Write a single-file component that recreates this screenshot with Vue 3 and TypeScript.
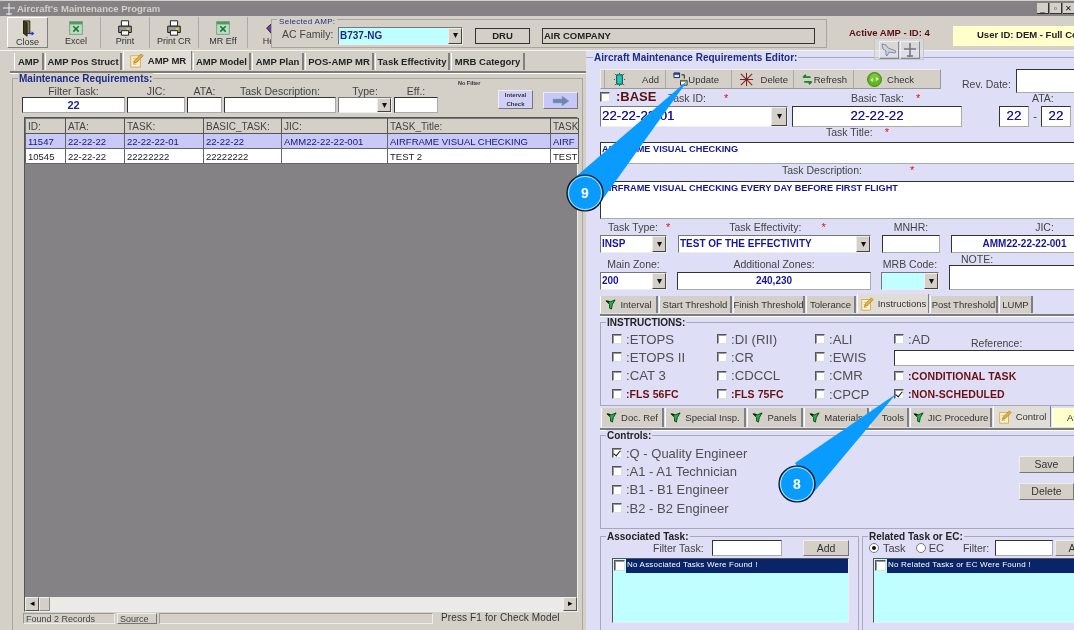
<script setup lang="ts">
interface Tab { label: string; w: number; icon?: 'note' | 'flag'; active?: boolean; pad?: boolean; yellow?: boolean }
interface Check { label: string; on?: boolean; bold?: boolean }

const topButtons = [
  { label: 'Close', icon: 'door', w: 41 },
  { label: 'Excel', icon: 'excel', w: 49 },
  { label: 'Print', icon: 'printer', w: 49 },
  { label: 'Print CR', icon: 'printer', w: 49 },
  { label: 'MR Eff', icon: 'excel', w: 49 },
  { label: 'Help', icon: 'help', w: 49 },
]
const leftTabs: Tab[] = [
  { label: 'AMP', w: 30 }, { label: 'AMP Pos Struct', w: 77 },
  { label: 'AMP MR', w: 69, icon: 'note', active: true }, { label: 'AMP Model', w: 58 },
  { label: 'AMP Plan', w: 52 }, { label: 'POS-AMP MR', w: 69 },
  { label: 'Task Effectivity', w: 75 }, { label: 'MRB Category', w: 74 },
]
const midTabs: Tab[] = [
  { label: 'Interval', w: 58, icon: 'flag' }, { label: 'Start Threshold', w: 73 },
  { label: 'Finish Threshold', w: 72 }, { label: 'Tolerance', w: 50 },
  { label: 'Instructions', w: 72, icon: 'note', active: true }, { label: 'Post Threshold', w: 68 },
  { label: 'LUMP', w: 34 },
]
const lowTabs: Tab[] = [
  { label: 'Doc. Ref', w: 63, icon: 'flag' }, { label: 'Special Insp.', w: 81, icon: 'flag' },
  { label: 'Panels', w: 56, icon: 'flag' }, { label: 'Materials', w: 65, icon: 'flag' },
  { label: 'Tools', w: 39, pad: true }, { label: 'JIC Procedure', w: 82, icon: 'flag' },
  { label: 'Control', w: 58, icon: 'note', active: true }, { label: 'Af', w: 40, yellow: true },
]
const toolButtons = [
  { label: 'Add', icon: 'add', w: 61, pl: 7, pr: 6 }, { label: 'Update', icon: 'update', w: 66, pl: 7, pr: 12 },
  { label: 'Delete', icon: 'del', w: 62, pl: 7, pr: 5 }, { label: 'Refresh', icon: 'refresh', w: 60, pl: 7, pr: 6 },
  { label: 'Check', icon: 'check', w: 67, pl: 13, pr: 6 },
]
const instructionCols: Check[][] = [
  [{ label: ':ETOPS' }, { label: ':ETOPS II' }, { label: ':CAT 3' }, { label: ':FLS 56FC', bold: true }],
  [{ label: ':DI (RII)' }, { label: ':CR' }, { label: ':CDCCL' }, { label: ':FLS 75FC', bold: true }],
  [{ label: ':ALI' }, { label: ':EWIS' }, { label: ':CMR' }, { label: ':CPCP' }],
]
const controls: Check[] = [
  { label: ':Q - Quality Engineer', on: true }, { label: ':A1 - A1 Technician' },
  { label: ':B1 - B1 Engineer' }, { label: ':B2 - B2 Engineer' },
]
const columns = [
  { t: 'ID:', w: 40 }, { t: 'ATA:', w: 59 }, { t: 'TASK:', w: 79 }, { t: 'BASIC_TASK:', w: 78 },
  { t: 'JIC:', w: 106 }, { t: 'TASK_Title:', w: 163 }, { t: 'TASK', w: 28 },
]
const rows = [
  ['11547', '22-22-22', '22-22-22-01', '22-22-22', 'AMM22-22-22-001', 'AIRFRAME VISUAL CHECKING', 'AIRF'],
  ['10545', '22-22-22', '22222222', '22222222', '', 'TEST 2', 'TEST'],
]
</script>

<template>
  <div class="app">
    <svg class="defs" width="0" height="0">
      <symbol id="i-flag" viewBox="0 0 12 12"><path d="M1 2l5 1 5-2-3 5-1 5-2-1V6z" fill="#18c040" stroke="#0a2a12" stroke-width=".9"/><path d="M1 2l3 0 1 3z" fill="#111"/></symbol>
      <symbol id="i-note" viewBox="0 0 16 16"><rect x="2" y="3" width="10" height="12" fill="#fff6d8" stroke="#d9a441"/><path d="M4 6h6M4 9h6M4 12h4" stroke="#c9b98a"/><path d="M13 1l2 2-7 7-3 1 1-3z" fill="#f0b030" stroke="#8a6414" stroke-width=".6"/></symbol>
      <symbol id="i-door" viewBox="0 0 20 20"><path d="M5 1h7v14H5z" fill="#8a8440" stroke="#222"/><path d="M5 1l4 2v15l-4-3z" fill="#3f3a14" stroke="#222"/><path d="M11 15h5" stroke="#1f3fd0" stroke-width="1.6"/><path d="M14 12.5l3 2.5-3 2.5z" fill="#1f3fd0"/></symbol>
      <symbol id="i-excel" viewBox="0 0 20 20"><rect x="3" y="3" width="14" height="14" fill="#bfdcc0" stroke="#6aa07a"/><rect x="3" y="3" width="14" height="3" fill="#4e9a62"/><path d="M7 8l6 6M13 8l-6 6" stroke="#1a7a3a" stroke-width="1.8"/></symbol>
      <symbol id="i-printer" viewBox="0 0 20 20"><path d="M6 2h8v6H6z" fill="#fff" stroke="#111"/><path d="M3 8h14v7H3z" fill="#9a9a96" stroke="#111"/><path d="M6 13h8v5H6z" fill="#fff" stroke="#111"/><rect x="12" y="10" width="3" height="2" fill="#e8d020"/></symbol>
      <symbol id="i-help" viewBox="0 0 20 20"><path d="M4 10l8-7 6 7-8 7z" fill="#6a3ab0" stroke="#222"/></symbol>
      <symbol id="i-add" viewBox="0 0 16 16"><path d="M5 3h6v10H5z" fill="#1fc8c0" stroke="#043"/><path d="M3 2l1 1M13 2l-1 1M3 14l1-1M13 14l-1-1M2 8h1M13 8h1M8 1v1M8 14v1" stroke="#333"/></symbol>
      <symbol id="i-update" viewBox="0 0 16 16"><path d="M1 1h6v5H1z" fill="#dfeaff" stroke="#123"/><path d="M1 1h6v2H1z" fill="#1c3cc0"/><path d="M8 9h7v5H8z" fill="#fff" stroke="#123"/><path d="M8 9h7v1.5H8z" fill="#b08a20"/><path d="M9 3h3v4" stroke="#111" fill="none"/></symbol>
      <symbol id="i-del" viewBox="0 0 16 16"><path d="M2 2l12 12M14 2L2 14" stroke="#c02020" stroke-width="1.5"/><path d="M8 1v14M1 8h14" stroke="#333"/></symbol>
      <symbol id="i-refresh" viewBox="0 0 16 16"><path d="M12 5H4l2-3M4 11h8l-2 3" stroke="#0a8a2a" stroke-width="2" fill="none"/><path d="M2 5l3-3M14 11l-3 3" stroke="#052" stroke-width=".8"/></symbol>
      <symbol id="i-check" viewBox="0 0 16 16"><circle cx="8" cy="8" r="7.4" fill="#5fb81e" stroke="#3c8010"/><circle cx="8" cy="6" r="4.5" fill="#86d040" opacity=".7"/><path d="M3.5 8.5l2.5-2.2v4.4zM12.5 7.5L10 5.3v4.4z" fill="#fff"/></symbol>
      <symbol id="i-arrow" viewBox="0 0 18 10"><path d="M1 3h9V0l7 5-7 5V7H1z" fill="#6e86ad" stroke="#8ea2c4" stroke-width=".5"/></symbol>
    </svg>

    <div class="titlebar">
      <svg class="plane" width="12" height="12" viewBox="0 0 12 12"><path d="M6 0v12M0 5h12M3 11h6" stroke="#eee" fill="none"/></svg>
      <span class="title-text">Aircraft's Maintenance Program</span>
      <div class="winbtns"><span class="winbtn">_</span><span class="winbtn">▫</span><span class="winbtn">✕</span></div>
    </div>

    <div class="topbar">
      <div class="top-tools">
        <div v-for="(b, i) in topButtons" :key="b.label" class="top-btn" :class="{ raised: i === 0 }" :style="{ width: b.w + 'px' }">
          <svg width="18" height="18"><use :href="'#i-' + b.icon" /></svg>
          <span>{{ b.label }}</span>
        </div>
      </div>
      <div class="amp-group">
        <span class="amp-legend">Selected AMP:</span>
        <span class="amp-label">AC Family:</span>
        <div class="combo cyan amp-combo"><span class="combo-text navy-b">B737-NG</span><span class="arrow">▾</span></div>
        <div class="boxed dru">DRU</div>
        <div class="boxed company">AIR COMPANY</div>
      </div>
      <div class="active-amp">Active AMP - ID: 4</div>
      <div class="user-box">User ID: DEM - Full Control</div>
    </div>

    <div class="mini-icons">
      <span class="mini"><svg width="16" height="14" viewBox="0 0 16 14"><path d="M1 1l4 1 2 3 8 3-1 2-6-1-2 4-1-1v-4L2 6z" fill="#cdd2f0" stroke="#777" stroke-width=".8"/></svg></span>
      <span class="mini"><svg width="16" height="16" viewBox="0 0 16 16"><path d="M8 1v14M2 7h12M5 14h6" stroke="#777" stroke-width="1.6" fill="none"/></svg></span>
    </div>

    <div class="main">
      <section class="left">
        <div class="tabs left-tabs">
          <div v-for="t in leftTabs" :key="t.label" class="tab bold-tab" :class="{ active: t.active }" :style="{ width: t.w + 'px' }">
            <svg v-if="t.icon" width="15" height="15"><use :href="'#i-' + t.icon" /></svg>{{ t.label }}
          </div>
        </div>
        <div class="left-rule"></div>
        <div class="mr-group">
          <span class="legend navy-b">Maintenance Requirements:</span>
          <div class="filter-row">
            <div class="filters">
              <span class="lbl">Filter Task:</span><span class="lbl">JIC:</span><span class="lbl">ATA:</span>
              <span class="lbl">Task Description:</span><span class="lbl">Type:</span><span class="lbl">Eff.:</span>
              <div class="input center navy-b">22</div><div class="input"></div><div class="input"></div><div class="input"></div>
              <div class="combo"><span class="combo-text"></span><span class="arrow">▾</span></div><div class="input"></div>
            </div>
            <span class="nofilter">No Filter</span>
            <div class="interval">Interval Check</div>
            <div class="go"><svg width="18" height="10"><use href="#i-arrow" /></svg></div>
          </div>
          <div class="grid-box">
            <table class="table">
              <colgroup><col v-for="c in columns" :key="c.t" :style="{ width: c.w + 'px' }" /></colgroup>
              <thead><tr><th v-for="c in columns" :key="c.t">{{ c.t }}</th></tr></thead>
              <tbody>
                <tr v-for="(r, i) in rows" :key="r[0]" :class="{ sel: i === 0 }"><td v-for="(c, j) in r" :key="j">{{ c }}</td></tr>
              </tbody>
            </table>
            <div class="grid-empty"></div>
            <div class="hscroll"><span class="sbtn">◂</span><span class="thumb"></span><span class="track"></span><span class="sbtn">▸</span></div>
          </div>
          <div class="status">
            <span class="st st1">Found 2 Records</span><span class="st st2">Source</span><span class="st st3"></span>
            <span class="press">Press F1 for Check Model</span>
          </div>
        </div>
      </section>

      <section class="right">
        <div class="ed-head"><span class="legend navy-b ed-legend">Aircraft Maintenance Requirements Editor:</span></div>
        <div class="tool-row">
          <div class="tools">
            <div v-for="b in toolButtons" :key="b.label" class="tool" :style="{ width: b.w + 'px', paddingLeft: b.pl + 'px', paddingRight: b.pr + 'px' }">
              <svg width="15" height="15"><use :href="'#i-' + b.icon" /></svg><span>{{ b.label }}</span>
            </div>
          </div>
          <span class="lbl rev-lbl">Rev. Date:</span>
          <div class="input rev"></div>
        </div>

        <div class="row-base">
          <span class="cb"></span><span class="base">:BASE</span>
          <span class="lbl task-id">Task ID:<i>*</i></span>
          <span class="lbl basic">Basic Task:<i>*</i></span>
          <span class="lbl ata">ATA:</span>
        </div>
        <div class="row-ids">
          <div class="combo big-combo"><span class="combo-text navy-l">22-22-22-01</span><span class="arrow">▾</span></div>
          <div class="input center navy-l basic-input">22-22-22</div>
          <div class="input center navy-l ata-input">22</div><span class="dash">-</span>
          <div class="input center navy-l ata-input">22</div><span class="dash">-</span>
        </div>
        <div class="lbl title-lbl">Task Title:<i>*</i></div>
        <div class="input wide title-input navy-s">AIRFRAME VISUAL CHECKING</div>
        <div class="lbl desc-lbl">Task Description:<i>*</i></div>
        <div class="input wide desc-input navy-s">AIRFRAME VISUAL CHECKING EVERY DAY BEFORE FIRST FLIGHT</div>

        <div class="form-grid">
          <span class="lbl ty">Task Type:<i>*</i></span><span class="lbl te">Task Effectivity:<i>*</i></span>
          <span class="lbl">MNHR:</span><span class="lbl jic">JIC:</span>
          <div class="combo"><span class="combo-text navy-s">INSP</span><span class="arrow">▾</span></div>
          <div class="combo"><span class="combo-text navy-s">TEST OF THE EFFECTIVITY</span><span class="arrow">▾</span></div>
          <div class="input"></div>
          <div class="input center navy-s">AMM22-22-22-001</div>
        </div>
        <div class="form-grid second">
          <span class="lbl">Main Zone:</span><span class="lbl">Additional Zones:</span><span class="lbl">MRB Code:</span>
          <div class="note-cell"><span class="lbl note-lbl">NOTE:</span><div class="input note"></div></div>
          <div class="combo"><span class="combo-text navy-s">200</span><span class="arrow">▾</span></div>
          <div class="input center navy-s">240,230</div>
          <div class="combo cyan"><span class="combo-text"></span><span class="arrow">▾</span></div>
        </div>

        <div class="tabs mid-tabs">
          <div v-for="t in midTabs" :key="t.label" class="tab" :class="{ active: t.active }" :style="{ width: t.w + 'px' }">
            <svg v-if="t.icon" :width="t.icon === 'note' ? 14 : 11" :height="t.icon === 'note' ? 14 : 11"><use :href="'#i-' + t.icon" /></svg>{{ t.label }}
          </div>
        </div>
        <div class="rule"></div>

        <div class="group instr">
          <span class="legend blk">INSTRUCTIONS:</span>
          <div v-for="(col, ci) in instructionCols" :key="ci" class="chk-col" :class="'c' + ci">
            <label v-for="c in col" :key="c.label" class="chk">
              <span class="cb"></span><span :class="c.bold ? 'red' : 'big'">{{ c.label }}</span>
            </label>
          </div>
          <div class="chk-col c3">
            <div class="chk"><span class="cb"></span><span class="big">:AD</span><span class="lbl ref">Reference:</span></div>
            <div class="input ref-input"></div>
            <div class="chk"><span class="cb"></span><span class="red">:CONDITIONAL TASK</span></div>
            <div class="chk"><span class="cb on"></span><span class="red">:NON-SCHEDULED</span></div>
          </div>
        </div>

        <div class="tabs low-tabs">
          <div v-for="t in lowTabs" :key="t.label" class="tab" :class="{ active: t.active, yellow: t.yellow, pad: t.pad }" :style="{ width: t.w + 'px' }">
            <svg v-if="t.icon" :width="t.icon === 'note' ? 14 : 11" :height="t.icon === 'note' ? 14 : 11"><use :href="'#i-' + t.icon" /></svg>{{ t.label }}
          </div>
        </div>
        <div class="rule"></div>

        <div class="group ctrl">
          <span class="legend blk">Controls:</span>
          <div class="ctrl-list">
            <div v-for="c in controls" :key="c.label" class="chk"><span class="cb" :class="{ on: c.on }"></span><span class="big ctrl-txt">{{ c.label }}</span></div>
          </div>
          <div class="ctrl-btns"><div class="btn">Save</div><div class="btn">Delete</div></div>
        </div>

        <div class="bottom">
          <div class="group assoc">
            <span class="legend blk">Associated Task:</span>
            <div class="assoc-top">
              <span class="lbl">Filter Task:</span><div class="input f1"></div><div class="btn add">Add</div>
            </div>
            <div class="listbox"><div class="list-item"><span class="cb list-cb"></span><span class="list-text">No Associated Tasks Were Found !</span></div></div>
          </div>
          <div class="group relat">
            <span class="legend blk">Related Task or EC:</span>
            <div class="assoc-top">
              <span class="radio on"></span><span class="lbl rl">Task</span>
              <span class="radio"></span><span class="lbl rl rl2">EC</span>
              <span class="lbl ff">Filter:</span><div class="input f2"></div><div class="btn add">Add</div>
            </div>
            <div class="listbox"><div class="list-item"><span class="cb list-cb"></span><span class="list-text">No Related Tasks or EC Were Found !</span></div></div>
          </div>
        </div>
      </section>
    </div>

    <svg class="callouts" width="1074" height="630" viewBox="0 0 1074 630">
      <polygon points="688,80 572,180 600,203" fill="#0a9bff" />
      <polygon points="896,394 795,463 813,493" fill="#0a9bff" />
      <g>
        <circle cx="585" cy="193" r="18" fill="#0a9bff" stroke="#111" stroke-width="1.2" />
        <circle cx="585" cy="193" r="16.5" fill="none" stroke="#e8f4ff" stroke-width=".8" />
        <text x="585" y="198" class="num">9</text>
        <circle cx="797" cy="484" r="18" fill="#0a9bff" stroke="#111" stroke-width="1.2" />
        <circle cx="797" cy="484" r="16.5" fill="none" stroke="#e8f4ff" stroke-width=".8" />
        <text x="797" y="489" class="num">8</text>
      </g>
    </svg>
  </div>
</template>

<style scoped>
.app { position: relative; width: 1074px; height: 630px; overflow: hidden; background: #d4d0c8; font: 10px "Liberation Sans", Arial, sans-serif; color: #333; display: flex; flex-direction: column; filter: blur(.3px); }
.defs { position: absolute; }
.titlebar { height: 15px; margin-top: 1px; background: #848284; display: flex; align-items: center; color: #d4d0c8; flex: none; }
.plane { margin: 0 2px 0 3px; }
.title-text { font-weight: bold; font-size: 9.5px; }
.winbtns { margin-left: auto; display: flex; gap: 1px; width: 37px; overflow: hidden; }
.winbtn { flex: none; width: 12px; height: 11px; background: #d4d0c8; color: #111; font-size: 8px; line-height: 11px; text-align: center; border-right: 1px solid #333; border-bottom: 1px solid #333; box-sizing: border-box; }

.topbar { height: 34px; display: flex; flex: none; border-bottom: 1px solid #f4f2ee; }
.top-tools { width: 271px; display: flex; padding-left: 7px; box-sizing: border-box; overflow: hidden; height: 31px; margin-top: 1px; flex: none; }
.top-btn { flex: none; display: flex; flex-direction: column; align-items: center; box-sizing: border-box; border-right: 1px solid #aaa; padding-top: 2px; color: #333; font-size: 9px; white-space: nowrap; }
.top-btn svg { margin-bottom: -1px; }
.top-btn.raised { border: 1px solid; border-color: #fff #808080 #808080 #fff; background: #dcd8d0; margin-right: 4px; }
.amp-group { position: relative; width: 556px; margin-top: 3px; height: 29px; border: 1px solid #a8a69e; box-sizing: border-box; flex: none; display: flex; align-items: center; }
.amp-legend { position: absolute; left: 5px; top: -3px; background: #d4d0c8; color: #24307a; font-size: 8px; padding: 0 2px; letter-spacing: .3px; white-space: nowrap; }
.amp-label { margin-left: 10px; width: 56px; font-size: 10.5px; color: #444; padding-top: 0; flex: none; white-space: nowrap; }
.amp-combo { width: 125px; height: 18px; margin-top: 4px; flex: none; }
.boxed { height: 16px; border: 1px solid #333; box-sizing: border-box; margin-top: 4px; font-weight: bold; font-size: 9.5px; color: #222; line-height: 14px; flex: none; }
.dru { width: 55px; margin-left: 12px; text-align: center; }
.company { width: 273px; margin-left: 12px; padding-left: 1px; }
.active-amp { margin: 11px 0 0 22px; width: 104px; color: #5a0f10; font-weight: bold; font-size: 9.5px; flex: none; white-space: nowrap; }
.user-box { width: 180px; height: 20px; margin-top: 10px; background: #ffffcc; padding: 3px 0 0 24px; box-sizing: border-box; font-weight: bold; font-size: 9.5px; color: #222; flex: none; white-space: nowrap; }
.mini-icons { position: absolute; left: 874px; top: 38px; width: 50px; height: 22px; display: flex; justify-content: center; gap: 1px; background: rgba(222,222,232,.5); border: 1px solid #c8c6c8; box-sizing: border-box; z-index: 3; padding-top: 2px; }
.mini { width: 18px; height: 16px; border: 1px solid; border-color: #eee #888 #888 #eee; display: flex; align-items: center; justify-content: center; }

.main { flex: 1; display: flex; min-height: 0; }
.left { width: 586px; flex: none; padding-top: 2px; box-sizing: border-box; display: flex; flex-direction: column; }
.tabs { display: flex; flex: none; }
.tab { flex: none; box-sizing: border-box; border-right: 2px solid #808080; border-left: 1px solid #fff; height: 17px; margin-right: 1px; display: flex; align-items: center; justify-content: center; gap: 4px; white-space: nowrap; font-size: 9.5px; color: #333; background: #d4d0c8; }
.bold-tab { font-weight: bold; font-size: 9.5px; color: #222; }
.tab.active { height: 19px; margin-top: -2px; background: #e0ddd6; border-right: 1px solid #808080; }
.tab.yellow { background: #ffffcc; justify-content: flex-start; padding-left: 14px; border-right: 0; }
.tab.pad { justify-content: flex-end; padding-right: 3px; }
.left-tabs { padding-left: 14px; }
.left-rule { height: 2px; margin: 1px 0 0 10px; background: #7e7c78; border-bottom: 1px solid #fff; }
.mr-group { position: relative; flex: 1; margin: 4px 3px 0 12px; border: 1px solid #a8a69e; border-bottom: 0; display: flex; flex-direction: column; min-height: 0; }
.legend { position: absolute; left: 5px; top: -6px; padding: 0 1px; background: #d4d0c8; font-size: 10px; white-space: nowrap; line-height: 12px; font-weight: bold; }
.navy-b { color: #1c2a8a; font-weight: bold; }
.navy-s { color: #16169a; font-weight: bold; font-size: 9.5px; }
.navy-l { color: #16169a; font-weight: normal; text-shadow: 0 0 .5px #16169a; }
.input.navy-l, .combo-text.navy-l { font-size: 13.3px; }
.input.navy-s { font-size: 10px; }
.combo-text.navy-s { font-size: 10px; }
.filter-row { display: flex; padding: 6px 0 0 9px; flex: none; height: 33px; box-sizing: border-box; }
.filters { width: 418px; display: grid; grid-template-columns: 103px 58px 35px 112px 54px 44px; column-gap: 2px; grid-template-rows: 12px 16px; flex: none; }
.lbl { color: #444; font-size: 10.5px; text-align: center; white-space: nowrap; line-height: 12px; }
.lbl i { color: #e01010; font-style: normal; margin-left: 12px; font-size: 11px; }
.input { background: #fff; border: 1px solid; border-color: #333 #aaa #aaa #333; box-sizing: border-box; overflow: hidden; white-space: nowrap; font-size: 11px; line-height: 14px; }
.center { text-align: center; }
.combo { display: flex; background: #fff; border: 1px solid; border-color: #777 #eee #eee #777; box-sizing: border-box; min-width: 0; }
.combo.cyan { background: #c0ffff; }
.combo-text { flex: 1; padding-left: 1px; overflow: hidden; white-space: nowrap; line-height: 16px; min-width: 0; }
.arrow { width: 14px; flex: none; background: #d4d0c8; border: 1px solid; border-color: #eee #444 #444 #eee; box-sizing: border-box; font-size: 10px; text-align: center; color: #111; line-height: 12px; overflow: hidden; }
.nofilter { width: 40px; margin-left: 18px; font-size: 5.5px; font-weight: bold; color: #333; margin-top: -5px; flex: none; white-space: nowrap; }
.interval { width: 35px; height: 19px; margin: 5px 0 0 0; background: #d0d0f8; border: 1px solid; border-color: #eee #777 #777 #eee; box-sizing: border-box; font-size: 6px; font-weight: bold; text-align: center; color: #333; line-height: 9px; flex: none; overflow: hidden; }
.go { width: 35px; height: 17px; margin: 7px 0 0 10px; background: #c8c8f8; border: 1px solid; border-color: #eee #777 #777 #eee; box-sizing: border-box; display: flex; align-items: center; justify-content: center; flex: none; }
.grid-box { margin: 5px 4px 0 11px; height: 495px; display: flex; flex-direction: column; background: #848284; border: 1px solid; border-color: #555 #eee #eee #555; flex: none; box-sizing: border-box; }
.table { border-collapse: collapse; table-layout: fixed; width: 100%; background: #848284; font-size: 9.5px; }
.table th { background: #d4d0c8; font-weight: normal; text-align: left; color: #444; height: 15px; padding: 0 0 0 2px; border: 1px solid; border-color: #777 #555 #555 #777; overflow: hidden; white-space: nowrap; font-size: 10px; box-sizing: border-box; }
.table td { background: #fff; color: #222; height: 15px; padding: 0 0 0 2px; border: 1px solid #666; overflow: hidden; white-space: nowrap; box-sizing: border-box; }
.table tr.sel td { background: #c9c9f7; color: #14147a; }
.grid-empty { flex: 1; }
.hscroll { height: 14px; display: flex; background: #eceae6; flex: none; }
.sbtn { width: 14px; background: #d4d0c8; border: 1px solid; border-color: #eee #555 #555 #eee; box-sizing: border-box; font-size: 9px; line-height: 11px; text-align: center; color: #000; flex: none; }
.thumb { width: 11px; background: #d4d0c8; border: 1px solid; border-color: #eee #888 #888 #eee; box-sizing: border-box; flex: none; }
.track { flex: 1; }
.status { display: flex; padding: 1px 0 0 10px; height: 11px; flex: none; font-size: 9px; line-height: 10px; color: #444; }
.st { box-sizing: border-box; border: 1px solid; border-color: #999 #eee #eee #999; padding-left: 2px; height: 11px; flex: none; margin-right: 2px; }
.st1 { width: 92px; }
.st2 { width: 40px; background: #d4d0c8; border-color: #eee #777 #777 #eee; }
.st3 { width: 274px; }
.press { margin-left: 6px; font-size: 10px; color: #333; letter-spacing: .13px; white-space: nowrap; }

.right { flex: 1; min-width: 0; background: #dedef6; padding-left: 14px; box-sizing: border-box; }
.right > * { width: 500px; }
.ed-head { position: relative; height: 12px; margin: 6px 0 0 -14px; width: 502px; border-top: 1px solid #a8a8b8; box-sizing: border-box; }
.ed-legend { left: 7px; background: #dedef6; }
.tool-row { display: flex; height: 21px; align-items: flex-start; }
.tools { width: 341px; height: 20px; background: #d4d0c8; border: 1px solid; border-color: #eee #999 #999 #eee; box-sizing: border-box; display: flex; padding-left: 3px; flex: none; }
.tool { flex: none; display: flex; align-items: center; justify-content: space-between; box-sizing: border-box; border-left: 1px solid #aaa; color: #333; font-size: 9.5px; white-space: nowrap; }
.rev-lbl { margin: 9px 0 0 21px; flex: none; }
.rev { width: 80px; height: 24px; margin-left: 5px; flex: none; }
.row-base { display: flex; height: 16px; align-items: flex-start; position: relative; }
.row-base .cb { margin-top: 2px; }
.base { font-size: 13px; font-weight: bold; color: #5a0f10; margin-left: 2px; width: 52px; flex: none; line-height: 14px; }
.task-id { margin-top: 2px; margin-left: 0; width: 60px; text-align: left; flex: none; }
.task-id i { margin-left: 18px; }
.basic { margin-top: 2px; margin-left: 123px; width: 70px; text-align: left; flex: none; }
.ata { margin-top: 2px; margin-left: 111px; flex: none; }
.row-ids { display: flex; height: 21px; }
.big-combo { width: 188px; height: 21px; flex: none; }
.big-combo .combo-text { line-height: 18px; }
.big-combo .arrow { width: 16px; line-height: 16px; }
.basic-input { width: 170px; margin-left: 4px; line-height: 18px; flex: none; }
.ata-input { width: 30px; line-height: 18px; flex: none; }
.basic-input + .ata-input { margin-left: 37px; }
.dash { width: 12px; text-align: center; line-height: 20px; font-size: 11px; flex: none; }
.title-lbl { height: 15px; text-align: left; padding-left: 226px; line-height: 11px; box-sizing: border-box; }
.wide { padding-left: 1px; }
.input.title-input { height: 22px; line-height: 13px; font-size: 9.2px; }
.desc-lbl { height: 17px; text-align: left; padding-left: 182px; line-height: 12px; box-sizing: border-box; padding-top: 0; }
.desc-lbl i { margin-left: 48px; }
.input.desc-input { height: 38px; line-height: 12px; font-size: 9.2px; white-space: normal; }
.form-grid { display: grid; grid-template-columns: 67px 193px 58px 147px; column-gap: 11px; grid-template-rows: 13px 18px; margin-top: 3px; }
.form-grid .lbl { line-height: 11px; }
.form-grid .lbl i { margin-left: 8px; }
.form-grid .ty { padding-left: 8px; }
.form-grid .te { padding-left: 6px; }
.form-grid .te i { margin-left: 20px; }
.form-grid .jic { padding-left: 40px; }
.form-grid > .input, .form-grid > .combo { height: 18px; line-height: 15px; }
.form-grid .arrow { line-height: 13px; }
.second { margin-top: 6px; grid-template-columns: 67px 194px 58px 147px; column-gap: 10px; }
.note-cell { grid-row: 1 / 3; grid-column: 4; display: flex; flex-direction: column; margin-top: -5px; }
.note-lbl { text-align: left; padding-left: 12px; height: 11px; }
.note { height: 26px; }
.mid-tabs { margin-top: 6px; height: 17px; }
.mid-tabs .tab { height: 17px; }
.mid-tabs .tab.active { height: 19px; margin-top: -2px; background: #e0ddd6; }
.rule { height: 2px; background: #7e7c78; border-bottom: 1px solid #fff; margin-top: 1px; }
.group { position: relative; border: 1px solid #a8a8b8; box-sizing: border-box; }
.group .legend { background: #dedef6; }
.blk { color: #222; font-weight: bold; font-size: 10px; }
.instr { margin-top: 5px; height: 84px; display: flex; padding: 7px 0 0 11px; }
.chk-col { display: flex; flex-direction: column; flex: none; }
.chk-col.c0 { width: 105px; }
.chk-col.c1 { width: 98px; }
.chk-col.c2 { width: 79px; }
.chk-col.c3 { width: 190px; }
.chk { display: flex; align-items: center; height: 18.3px; flex: none; position: relative; }
.cb { display: inline-block; width: 10px; height: 10px; background: #fff; border: 1px solid; border-color: #555 #ddd #ddd #555; box-shadow: inset 1px 1px 0 #999; box-sizing: border-box; flex: none; margin-right: 4px; position: relative; }
.cb.on::after { content: ""; position: absolute; left: 2px; top: 0; width: 3px; height: 6px; border: solid #111; border-width: 0 1.5px 1.5px 0; transform: rotate(40deg); }
.big { font-size: 13.2px; color: #505050; white-space: nowrap; }
.ctrl-txt { font-size: 13px; }
.red { font-size: 10.5px; font-weight: bold; color: #6a1010; white-space: nowrap; letter-spacing: .08px; }
.ref { position: absolute; left: 77px; top: 7px; }
.ref-input { width: 190px; height: 16px; margin: 2px 0 .3px; }
.low-tabs { margin: 2px 0 0 1px; height: 19px; }
.low-tabs .tab { height: 19px; }
.low-tabs .tab.active { height: 21px; margin-top: -2px; background: #e0ddd6; }
.ctrl { margin-top: 4px; height: 94px; display: flex; padding: 8px 0 0 11px; }
.ctrl-list { width: 407px; flex: none; }
.ctrl-btns { display: flex; flex-direction: column; gap: 10px; margin-top: 12px; }
.btn { background: #d4d0c8; border: 1px solid; border-color: #eee #777 #777 #eee; box-sizing: border-box; text-align: center; height: 17px; width: 55px; line-height: 15px; font-size: 10.5px; color: #333; flex: none; }
.bottom { display: flex; margin-top: 7px; gap: 3px; height: 100px; }
.assoc { width: 259px; flex: none; padding: 2px 0 0 11px; }
.relat { width: 241px; flex: none; padding: 2px 0 0 6px; }
.assoc-top { display: flex; height: 18px; align-items: center; }
.assoc .assoc-top .lbl { margin-left: 41px; width: 59px; text-align: left; flex: none; }
.f1 { width: 70px; height: 16px; flex: none; }
.add { width: 46px; height: 16px; margin-left: 21px; }
.relat .add { margin-left: 2px; }
.radio { width: 10px; height: 10px; border-radius: 50%; background: #fff; border: 1px solid #777; box-sizing: border-box; flex: none; position: relative; }
.radio.on::after { content: ""; position: absolute; left: 2px; top: 2px; width: 4px; height: 4px; border-radius: 50%; background: #111; }
.rl { margin: 0 10px 0 4px; font-size: 11px; flex: none; }
.rl2 { margin: 0 0 0 3px; }
.ff { margin-left: 19px; width: 32px; text-align: left; flex: none; }
.f2 { width: 58px; height: 16px; flex: none; }
.listbox { height: 65px; margin-top: 1px; width: 237px; background: #c0ffff; border: 1px solid; border-color: #555 #eee #eee #555; box-sizing: border-box; }
.relat .listbox { margin-left: 4px; width: 230px; }
.list-item { display: flex; height: 14px; }
.list-cb { width: 11px; height: 11px; margin: 1px; }
.list-text { flex: 1; background: #0a246a; color: #fff; font-size: 8px; line-height: 12px; letter-spacing: .2px; white-space: nowrap; padding-left: 1px; }
.callouts { position: absolute; left: 0; top: 0; z-index: 5; pointer-events: none; }
.num { font: bold 14px "Liberation Sans", Arial, sans-serif; fill: #fff; text-anchor: middle; }
</style>
